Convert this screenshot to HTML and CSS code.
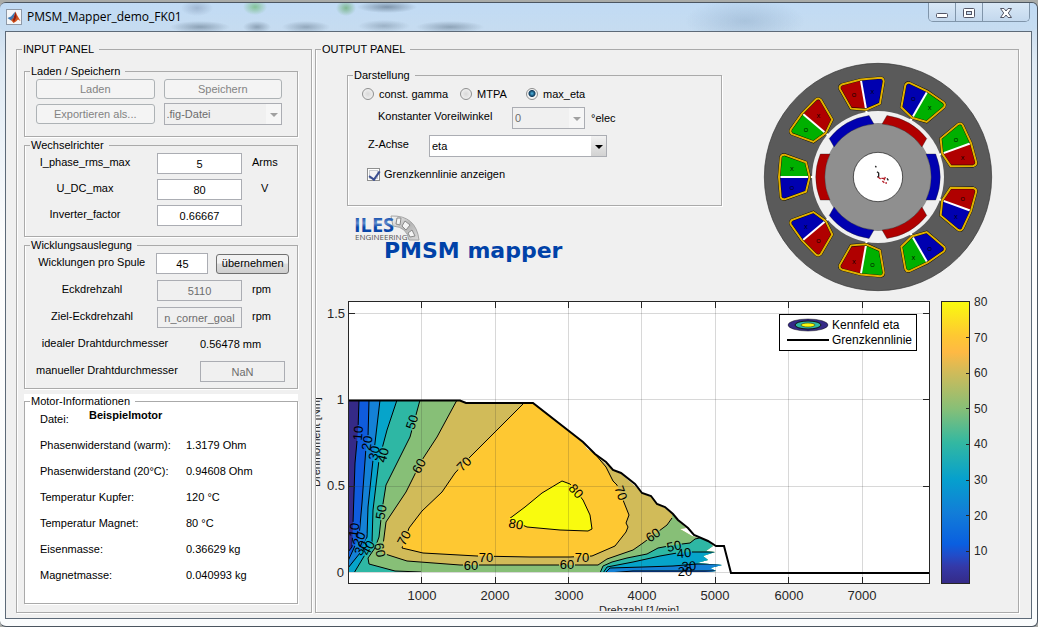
FILE: index.html
```html
<!DOCTYPE html>
<html lang="de">
<head>
<meta charset="UTF-8">
<meta name="viewport" content="width=device-width, initial-scale=1.0">
<title>PMSM_Mapper_demo_FK01</title>
<link rel="stylesheet" href="styles.css">
</head>
<body>
<div class="window">
    <header class="titlebar">
        <svg class="app-icon" width="16" height="16" viewBox="0 0 16 16">
            <rect x="0.5" y="0.5" width="15" height="15" fill="#f4f6f8" stroke="#8f9aa8"/>
            <path d="M1.5 9 L5 7.5 L8 4 L9.5 2.5 L7 11 L5 11.5 Z" fill="#3c78b4"/>
            <path d="M9.5 2.5 L11 6 L14.5 12 L12 10.5 L10 12.5 L7.5 14 L5 11 L7.5 9 Z" fill="#d4541c"/>
            <path d="M9.5 3 L10.5 8 L8 13 L7 11 Z" fill="#8e1f12"/>
        </svg>
        <h1 class="title">PMSM_Mapper_demo_FK01</h1>
        <div class="caption">
            <button type="button" aria-label="Minimieren">
                <svg width="14" height="12" viewBox="0 0 14 12"><rect x="1.5" y="6.5" width="11" height="4" rx="1" fill="#fff" stroke="#535666"/></svg>
            </button>
            <button type="button" aria-label="Maximieren">
                <svg width="14" height="12" viewBox="0 0 14 12"><rect x="1.5" y="1.5" width="11" height="9" rx="1" fill="#fff" stroke="#535666"/><rect x="4.5" y="4.5" width="5" height="3" fill="#c8dcf0" stroke="#535666"/></svg>
            </button>
            <button type="button" class="close" aria-label="Schließen">
                <svg width="14" height="12" viewBox="0 0 14 12"><path d="M1.5 1.5 H5 L7 4 L9 1.5 H12.5 L9.3 6 L12.5 10.5 H9 L7 8 L5 10.5 H1.5 L4.7 6 Z" fill="#fff" stroke="#535666"/></svg>
            </button>
        </div>
    </header>

    <main class="client">
        <fieldset class="panel input-panel">
            <legend>INPUT PANEL</legend>

            <fieldset class="group files">
                <legend>Laden / Speichern</legend>
                <button type="button" class="btn" disabled>Laden</button>
                <button type="button" class="btn" disabled>Speichern</button>
                <button type="button" class="btn" disabled>Exportieren als...</button>
                <span class="select disabled">
                    <select aria-label="Dateiformat" disabled><option>.fig-Datei</option></select>
                </span>
            </fieldset>

            <fieldset class="group inverter">
                <legend>Wechselrichter</legend>
                <div class="row">
                    <label for="iphase">I_phase_rms_max</label>
                    <input type="text" id="iphase" value="5">
                    <span>Arms</span>
                </div>
                <div class="row">
                    <label for="udc">U_DC_max</label>
                    <input type="text" id="udc" value="80">
                    <span class="unit-v">V</span>
                </div>
                <div class="row">
                    <label for="invfactor">Inverter_factor</label>
                    <input type="text" id="invfactor" value="0.66667">
                </div>
            </fieldset>

            <fieldset class="group winding">
                <legend>Wicklungsauslegung</legend>
                <div class="row">
                    <label for="turns">Wicklungen pro Spule</label>
                    <input type="text" id="turns" class="short" value="45">
                    <button type="button" class="btn apply">übernehmen</button>
                </div>
                <div class="row">
                    <label for="corner">Eckdrehzahl</label>
                    <input type="text" id="corner" value="5110" disabled>
                    <span>rpm</span>
                </div>
                <div class="row">
                    <label for="goal">Ziel-Eckdrehzahl</label>
                    <input type="text" id="goal" value="n_corner_goal" disabled>
                    <span>rpm</span>
                </div>
                <div class="row wire">
                    <label for="ideal">idealer Drahtdurchmesser</label>
                    <output id="ideal">0.56478 mm</output>
                </div>
                <div class="row wire">
                    <label for="manual">manueller Drahtdurchmesser</label>
                    <input type="text" id="manual" value="NaN" disabled>
                </div>
            </fieldset>

            <div class="motor-info">
                <fieldset class="group">
                    <legend>Motor-Informationen</legend>
                    <dl>
                        <div class="file"><dt>Datei:</dt><dd>Beispielmotor</dd></div>
                        <div><dt>Phasenwiderstand (warm):</dt><dd>1.3179 Ohm</dd></div>
                        <div><dt>Phasenwiderstand (20°C):</dt><dd>0.94608 Ohm</dd></div>
                        <div><dt>Temperatur Kupfer:</dt><dd>120 °C</dd></div>
                        <div><dt>Temperatur Magnet:</dt><dd>80 °C</dd></div>
                        <div><dt>Eisenmasse:</dt><dd>0.36629 kg</dd></div>
                        <div><dt>Magnetmasse:</dt><dd>0.040993 kg</dd></div>
                    </dl>
                </fieldset>
            </div>
        </fieldset>

        <fieldset class="panel output-panel">
            <legend>OUTPUT PANEL</legend>

            <div class="upper">
                <div class="settings">
                    <fieldset class="group view">
                        <legend>Darstellung</legend>
                        <div class="radios">
                            <label><input type="radio" name="mode"> const. gamma</label>
                            <label><input type="radio" name="mode"> MTPA</label>
                            <label><input type="radio" name="mode" checked> max_eta</label>
                        </div>
                        <div class="line angle">
                            <label for="gamma">Konstanter Voreilwinkel</label>
                            <span class="select disabled"><select id="gamma" disabled><option>0</option></select></span>
                            <span>°elec</span>
                        </div>
                        <div class="line zaxis">
                            <label for="zaxis">Z-Achse</label>
                            <span class="select"><select id="zaxis"><option>eta</option></select></span>
                        </div>
                        <div class="line">
                            <label class="check"><input type="checkbox" checked> Grenzkennlinie anzeigen</label>
                        </div>
                    </fieldset>

                    <svg class="logo" width="220" height="52" viewBox="352 215 220 52">
                        <defs>
                            <linearGradient id="steel" x1="0" y1="0" x2="1" y2="1">
                                <stop offset="0" stop-color="#fafafa"/><stop offset="0.5" stop-color="#b4b4b4"/><stop offset="1" stop-color="#dcdcdc"/>
                            </linearGradient>
                            <linearGradient id="ink" x1="0" y1="0" x2="0" y2="1">
                                <stop offset="0.2" stop-color="#0a46a8"/><stop offset="0.45" stop-color="#5f8ccc"/><stop offset="0.6" stop-color="#0a46a8"/>
                            </linearGradient>
                        </defs>
                        <path d="M391 218 Q416 217 419 242 L409 242 Q407 229 393 228 Z" fill="url(#steel)" stroke="#a4a4a4"/>
                        <path d="M397 220 l4 0 -1 7 -4 -1 Z M405 223 l5 4 -4 5 -4 -4 Z M412 232 l3 6 -5 1 -2 -4 Z" fill="#f4f4f4" stroke="#8a8a8a"/>
                        <text class="logo-iles" x="354" y="234" fill="url(#ink)">ILES</text>
                        <text class="logo-eng" x="355" y="242">ENGINEERING</text>
                        <text class="logo-name" x="384" y="260">PMSM mapper</text>
                    </svg>
                </div>

                <!-- stator, slots and rotor, origin in the shaft centre -->
                <svg class="motor" width="230" height="230" viewBox="-345 -345 690 690">
                    <defs>
                        <path id="sideA" d="M205 0 L216 -44 L280 -67 L291 -61 L296 0 Z"/>
                        <path id="sideB" d="M205 0 L216 44 L280 67 L291 61 L296 0 Z"/>
                        <g id="frame">
                            <path d="M194 0 H296" stroke="#fff" stroke-width="6"/>
                            <path d="M205 0 L216 -44 L280 -67 Q290 -68 292 -59 L297 0 L292 59 Q290 68 280 67 L216 44 Z" fill="none" stroke="#000" stroke-width="8"/>
                            <path d="M205 0 L216 -44 L280 -67 Q290 -68 292 -59 L297 0 L292 59 Q290 68 280 67 L216 44 Z" fill="none" stroke="#e0b000" stroke-width="6"/>
                        </g>
                        <path id="magnet" d="M144 -69 L173 -69 A186 186 0 0 1 173 69 L144 69 A160 160 0 0 0 144 -69 Z" stroke="#222" stroke-width="1"/>
                    </defs>
                    <circle r="341" fill="#5a5a5a" stroke="#333" stroke-width="2"/>
                    <circle r="198" fill="#f0f0f0"/>
                    <circle r="162" fill="#8f8f8f"/>
                    <circle r="74" fill="#fff" stroke="#111" stroke-width="2"/>

                    <g transform="rotate(180)"><use href="#sideA" class="blue"/><use href="#sideB" class="green"/><use href="#frame"/></g>
                    <g transform="rotate(-140)"><use href="#sideA" class="green"/><use href="#sideB" class="red"/><use href="#frame"/></g>
                    <g transform="rotate(-100)"><use href="#sideA" class="red"/><use href="#sideB" class="blue"/><use href="#frame"/></g>
                    <g transform="rotate(-60)"><use href="#sideA" class="blue"/><use href="#sideB" class="green"/><use href="#frame"/></g>
                    <g transform="rotate(-20)"><use href="#sideA" class="green"/><use href="#sideB" class="red"/><use href="#frame"/></g>
                    <g transform="rotate(20)"><use href="#sideA" class="red"/><use href="#sideB" class="blue"/><use href="#frame"/></g>
                    <g transform="rotate(60)"><use href="#sideA" class="blue"/><use href="#sideB" class="green"/><use href="#frame"/></g>
                    <g transform="rotate(100)"><use href="#sideA" class="green"/><use href="#sideB" class="red"/><use href="#frame"/></g>
                    <g transform="rotate(140)"><use href="#sideA" class="red"/><use href="#sideB" class="blue"/><use href="#frame"/></g>

                    <use href="#magnet" class="blue"/>
                    <use href="#magnet" class="red" transform="rotate(60)"/>
                    <use href="#magnet" class="blue" transform="rotate(120)"/>
                    <use href="#magnet" class="red" transform="rotate(180)"/>
                    <use href="#magnet" class="blue" transform="rotate(240)"/>
                    <use href="#magnet" class="red" transform="rotate(300)"/>

                    <g class="coil">
                        <text x="-258" y="-17">X</text><text x="-258" y="39">O</text>
                        <text x="-216" y="-134">O</text><text x="-179" y="-177">X</text>
                        <text x="-72" y="-239">O</text><text x="-17" y="-250">X</text>
                        <text x="106" y="-228">O</text><text x="155" y="-200">X</text>
                        <text x="234" y="-104">O</text><text x="254" y="-51">X</text>
                        <text x="254" y="73">O</text><text x="234" y="126">X</text>
                        <text x="155" y="221">O</text><text x="106" y="249">X</text>
                        <text x="-72" y="261">X</text><text x="-17" y="271">O</text>
                        <text x="-216" y="156">X</text><text x="-179" y="199">O</text>
                    </g>
                    <path d="M-8 -33 l3 4 M-3 -16 l5 4 v10 l-4 3 M27 4 l4 6" stroke="#222" stroke-width="4" fill="none"/>
                    <path d="M0 0 l8 6 M10 4 h8 M13 12 l6 5 M22 0 l-4 10 M22 18 h5" stroke="#b41e28" stroke-width="4" fill="none"/>
                </svg>
            </div>

            <svg class="chart" viewBox="316 295 702 316">
                <defs>
                    <linearGradient id="parula" x1="0" y1="1" x2="0" y2="0">
                        <stop offset="0" stop-color="#352a87"/>
                        <stop offset="0.06" stop-color="#3439a8"/>
                        <stop offset="0.1" stop-color="#214cc9"/>
                        <stop offset="0.14" stop-color="#0a5fe0"/>
                        <stop offset="0.25" stop-color="#127dd8"/>
                        <stop offset="0.37" stop-color="#06a0cd"/>
                        <stop offset="0.5" stop-color="#33b8a1"/>
                        <stop offset="0.62" stop-color="#87bf77"/>
                        <stop offset="0.75" stop-color="#d1bb59"/>
                        <stop offset="0.82" stop-color="#feb944"/>
                        <stop offset="0.88" stop-color="#fec832"/>
                        <stop offset="1" stop-color="#f9fb0e"/>
                    </linearGradient>
                    <clipPath id="field">
                        <path d="M348 400 H460 L466 403 H533 L583 443 L587 449 L595 454 L606 464 L613 470 L621 474 L635 486 L642 493 L651 497 L657 504 L665 508 L673 515 L678 521 L686 528 L680 529 L692 536 L708 541 L713 546 L706 551 L715 552 L703 556 L708 560 L697 563 L722 565 L710 568 L716 571 L705 572 H348 Z"/>
                    </clipPath>
                    <rect id="gap" x="-8" y="-5" width="16" height="10"/>
                    <mask id="gaps" maskUnits="userSpaceOnUse" x="340" y="390" width="400" height="190">
                        <rect x="340" y="390" width="400" height="190" fill="#fff"/>
                        <use href="#gap" transform="translate(358 433) rotate(-84)"/>
                        <use href="#gap" transform="translate(367 443) rotate(-80)"/>
                        <use href="#gap" transform="translate(374 453) rotate(-78)"/>
                        <use href="#gap" transform="translate(383 455) rotate(-75)"/>
                        <use href="#gap" transform="translate(412 422) rotate(-72)"/>
                        <use href="#gap" transform="translate(419 466) rotate(-62)"/>
                        <use href="#gap" transform="translate(464 464) rotate(-45)"/>
                        <use href="#gap" transform="translate(381 512) rotate(-80)"/>
                        <use href="#gap" transform="translate(404 538) rotate(-62)"/>
                        <use href="#gap" transform="translate(354 530) rotate(-82)"/>
                        <use href="#gap" transform="translate(359 539) rotate(-68)"/>
                        <use href="#gap" transform="translate(367 548) rotate(-62)"/>
                        <use href="#gap" transform="translate(381 550) rotate(80)"/>
                        <use href="#gap" transform="translate(486 557)"/>
                        <use href="#gap" transform="translate(471 565)"/>
                        <use href="#gap" transform="translate(582 557)"/>
                        <use href="#gap" transform="translate(567 564)"/>
                        <use href="#gap" transform="translate(576 491) rotate(48)"/>
                        <use href="#gap" transform="translate(516 524) rotate(10)"/>
                        <use href="#gap" transform="translate(621 493) rotate(70)"/>
                        <use href="#gap" transform="translate(653 535) rotate(-35)"/>
                        <use href="#gap" transform="translate(674 546) rotate(-12)"/>
                        <use href="#gap" transform="translate(684 553) rotate(-6)"/>
                    </mask>
                </defs>

                <rect x="348" y="301" width="582" height="283" fill="#fff"/>

                <!-- efficiency map -->
                <g clip-path="url(#field)">
                    <rect x="348" y="398" width="380" height="175" fill="#d1bb59"/>
                    <path class="f70" d="M524 403 L495 432 L470 457 L455 473 L442 492 L422 511 L409 528 L402 548 L423 553 L477 556 L530 557 H570 L592 556 L615 546 L626 532 L628 527 L626 523 L629 515 L625 505 L617 485 L613 481 L606 467 L595 454 L595 398 H524 Z"/>
                    <path class="f80" d="M509 519 L525 507 L542 493 L562 481 L570 484 L583 500 L590 515 L592 529 L588 531 L560 530 L527 527 Z"/>
                    <path class="f50" d="M457 400 L437 437 L422 460 L406 492 L386 522 L382 553 L407 561 L460 565 H598 L607 559 L633 550 L643 543 L667 525 L672 518 L672 510 H740 V574 H346 V398 Z"/>
                    <path class="f40" d="M420 400 L410 437 L397 463 L386 485 L382 510 L379 537 L375 548 L368 558 L369 564 L395 571 L421 572 V575 H346 V398 Z"/>
                    <path class="f30" d="M397 400 L387 430 L379 460 L373 510 L372 543 L354 573 H346 V398 Z"/>
                    <path class="f20" d="M380 400 L375 443 L373 460 L368 507 L367 537 L360 553 L348 568 H346 V398 Z"/>
                    <path class="f10" d="M369 400 L368 437 L366 447 L362 503 L359 537 L348 561 H346 V398 Z"/>
                    <path class="f0" d="M359 400 L358 430 L355 463 L353 523 L352 547 L348 552 H346 V398 Z"/>
                    <path class="f40" d="M600 573 L603 566 L612 562 L627 558 L647 554 L658 548 L674 545 L690 543 L695 539 L704 537 H740 V574 Z"/>
                    <path class="f30" d="M603 573 L607 567 L633 562 L660 556 L677 553 L690 552 H740 V574 Z"/>
                    <path class="f20" d="M605 573 L610 568 L643 567 L673 566 L697 564 H740 V574 Z"/>
                    <path class="f10" d="M608 573 L633 571 H740 V574 Z"/>
                </g>
                <g class="contours" clip-path="url(#field)">
                    <g mask="url(#gaps)">
                        <path d="M359 400 L358 430 L355 463 L353 523 L352 547 L348 552"/>
                        <path d="M369 400 L368 437 L366 447 L362 503 L359 537 L348 561"/>
                        <path d="M380 400 L375 443 L373 460 L368 507 L367 537 L360 553 L348 568"/>
                        <path d="M397 400 L387 430 L379 460 L373 510 L372 543 L354 573"/>
                        <path d="M420 400 L410 437 L397 463 L386 485 L382 510 L379 537 L375 548 L368 558 L369 564 L395 571 L421 572"/>
                        <path d="M457 400 L437 437 L422 460 L406 492 L386 522 L382 553 L407 561 L460 565 H598 L607 559 L633 550 L643 543 L667 525 L672 518"/>
                        <path d="M524 403 L495 432 L470 457 L455 473 L442 492 L422 511 L409 528 L402 548 L423 553 L477 556 L530 557 H570 L592 556 L615 546 L626 532 L628 527 L626 523 L629 515 L625 505 L617 485 L613 481 L606 467 L595 454"/>
                        <path d="M509 519 L525 507 L542 493 L562 481 L570 484 L583 500 L590 515 L592 529 L588 531 L560 530 L527 527 Z"/>
                        <path d="M600 573 L603 566 L612 562 L627 558 L647 554 L658 548 L674 545 L690 543 L695 539 L704 537"/>
                        <path d="M603 573 L607 567 L633 562 L660 556 L677 553 L690 552 H715"/>
                        <path d="M605 573 L610 568 L643 567 L673 566 L697 564 H722"/>
                        <path d="M608 573 L633 571 H716"/>
                    </g>
                </g>

                <path class="gridlines" d="M421.5 302 V583 M495.5 302 V583 M568.5 302 V583 M641.5 302 V583 M715.5 302 V583 M788.5 302 V583 M862.5 302 V583 M349 313.5 h580 M349 399.5 h580 M349 486.5 h580 M349 572.5 h580"/>
                <path class="limit" d="M348 400.5 H460 L466 403 H533 L583 442 L595 454 L606 462 L613 470 L621 473 L635 484 L642 493 L651 496 L657 504 L665 507 L673 514 L678 520 L688 528 L694 535 L708 541 L716 546 H724 L731 573 H930"/>

                <g class="clabels">
                    <text transform="translate(358 433) rotate(-84)">10</text>
                    <text transform="translate(367 443) rotate(-80)">20</text>
                    <text transform="translate(374 453) rotate(-78)">30</text>
                    <text transform="translate(383 455) rotate(-75)">40</text>
                    <text transform="translate(412 422) rotate(-72)">50</text>
                    <text transform="translate(419 466) rotate(-62)">60</text>
                    <text transform="translate(464 464) rotate(-45)">70</text>
                    <text transform="translate(381 512) rotate(-80)">50</text>
                    <text transform="translate(404 538) rotate(-62)">70</text>
                    <text transform="translate(354 530) rotate(-82)">10</text>
                    <text transform="translate(359 539) rotate(-68)">20</text>
                    <text transform="translate(361 548) rotate(-62)">30</text>
                    <text transform="translate(368 548) rotate(-62)">40</text>
                    <text transform="translate(380 550) rotate(80)">60</text>
                    <text transform="translate(486 557)">70</text>
                    <text transform="translate(471 565)">60</text>
                    <text transform="translate(582 557)">70</text>
                    <text transform="translate(567 564)">60</text>
                    <text transform="translate(576 491) rotate(48)">80</text>
                    <text transform="translate(516 524) rotate(10)">80</text>
                    <text transform="translate(621 493) rotate(70)">70</text>
                    <text transform="translate(653 535) rotate(-35)">60</text>
                    <text transform="translate(674 546) rotate(-12)">50</text>
                    <text transform="translate(684 553) rotate(-6)">40</text>
                    <text transform="translate(689 566) rotate(-4)">30</text>
                    <text transform="translate(685 571)">20</text>
                </g>

                <!-- axes -->
                <rect class="axis" x="348.5" y="301.5" width="581" height="282"/>
                <path class="axis" d="M421.5 302 v6 M495.5 302 v6 M568.5 302 v6 M641.5 302 v6 M715.5 302 v6 M788.5 302 v6 M862.5 302 v6 M421.5 583 v-6 M495.5 583 v-6 M568.5 583 v-6 M641.5 583 v-6 M715.5 583 v-6 M788.5 583 v-6 M862.5 583 v-6 M349 313.5 h6 M349 486.5 h6 M929 313.5 h-6 M929 399.5 h-6 M929 486.5 h-6"/>
                <g class="ticks xticks">
                    <text x="422" y="600">1000</text><text x="495" y="600">2000</text><text x="569" y="600">3000</text><text x="642" y="600">4000</text><text x="715" y="600">5000</text><text x="789" y="600">6000</text><text x="862" y="600">7000</text>
                    <text class="xlabel" x="639" y="614">Drehzahl [1/min]</text>
                </g>
                <g class="ticks yticks">
                    <text x="345" y="318">1.5</text><text x="344" y="404">1</text><text x="345" y="490">0.5</text><text x="344" y="577">0</text>
                </g>
                <text class="ylabel" transform="translate(320 442) rotate(-90)">Drehmoment [Nm]</text>

                <!-- legend -->
                <rect x="779.5" y="314.5" width="137" height="36" fill="#fff" stroke="#000"/>
                <ellipse cx="808" cy="325" rx="20" ry="6" fill="#352a87" stroke="#111" stroke-width="0.5"/>
                <ellipse cx="808" cy="325" rx="13" ry="4" fill="#2eb7a4" stroke="#111"/>
                <ellipse cx="808" cy="325" rx="7" ry="2" fill="#f9fb0e" stroke="#111" stroke-width="0.5"/>
                <path d="M787 340 H829" stroke="#000" stroke-width="2"/>
                <g class="key"><text x="832" y="329">Kennfeld eta</text><text x="832" y="344">Grenzkennlinie</text></g>

                <!-- colour bar -->
                <rect x="941.5" y="301.5" width="28" height="282" fill="url(#parula)" stroke="#262626"/>
                <path class="axis" d="M969 337.5 h-3 M969 373.5 h-3 M969 408.5 h-3 M969 444.5 h-3 M969 480.5 h-3 M969 515.5 h-3 M969 551.5 h-3"/>
                <g class="cticks">
                    <text x="974" y="306">80</text><text x="974" y="342">70</text><text x="974" y="377">60</text><text x="974" y="413">50</text><text x="974" y="448">40</text><text x="974" y="484">30</text><text x="974" y="520">20</text><text x="974" y="555">10</text>
                </g>
            </svg>
        </fieldset>
    </main>
</div>
</body>
</html>
```
FILE: styles.css
```css
* {
    box-sizing: border-box;
}

body {
    margin: 0;
    padding-top: 2px;
    min-height: 100vh;
    display: flex;
    background: #a9aba8;
    font: 11px/13px "Liberation Sans", Arial, sans-serif;
    color: #000;
}

button, input, select {
    font: inherit;
    color: inherit;
    margin: 0;
}

fieldset {
    margin: 0;
    min-width: 0;
}

/* window frame */
.window {
    flex: 1;
    display: flex;
    flex-direction: column;
    padding: 0 5px 7px;
    border: 1px solid #4b5560;
    border-width: 1px 1px 1px 0;
    border-radius: 6px;
    background: linear-gradient(#c3d9ee 0, #cfe0f0 30px, #dfeaf4 60px, #fdfdfd 240px, #fafcfd 100%);
}

.titlebar {
    display: flex;
    align-items: flex-start;
    height: 28px;
    margin: 0 -5px;
    padding: 0 7px 0 6px;
    border-radius: 5px;
    background:
        radial-gradient(ellipse 30px 6px at 200px 24px, rgba(70, 90, 110, 0.45), transparent),
        radial-gradient(ellipse 14px 6px at 257px 24px, rgba(70, 90, 110, 0.45), transparent),
        radial-gradient(ellipse 24px 6px at 306px 24px, rgba(70, 90, 110, 0.4), transparent),
        radial-gradient(ellipse 16px 8px at 197px 5px, rgba(110, 130, 160, 0.4), transparent),
        radial-gradient(ellipse 12px 8px at 255px 4px, rgba(70, 170, 60, 0.5), transparent),
        radial-gradient(ellipse 10px 8px at 346px 5px, rgba(60, 150, 50, 0.5), transparent),
        radial-gradient(ellipse 30px 6px at 387px 4px, rgba(60, 80, 100, 0.5), transparent),
        radial-gradient(ellipse 26px 6px at 384px 23px, rgba(60, 80, 100, 0.3), transparent),
        radial-gradient(ellipse 34px 6px at 450px 24px, rgba(60, 80, 100, 0.4), transparent),
        radial-gradient(ellipse 60px 22px at 745px 18px, rgba(130, 160, 190, 0.4), transparent),
        linear-gradient(rgba(190, 220, 250, 0.5), rgba(190, 216, 240, 0.5));
}

.app-icon {
    margin-top: 6px;
}

.title {
    flex: 1;
    margin: 5px 0 0 5px;
    font: 12px/17px "Open Sans", "Noto Sans", sans-serif;
}

.caption {
    display: flex;
    height: 19px;
    border: 1px solid #8095aa;
    border-top: 0;
    border-radius: 0 0 5px 5px;
}

.caption button {
    width: 27px;
    padding: 2px 0 0;
    border: 0;
    border-right: 1px solid #8095aa;
    background: linear-gradient(#d9e8f6, #c3d8ed);
}

.caption svg {
    display: block;
    margin: 0 auto;
}

.caption .close {
    width: 46px;
    border-right: 0;
    border-radius: 0 0 4px 0;
}

.caption button:first-child {
    border-radius: 0 0 0 4px;
}

.client {
    flex: 1;
    display: grid;
    grid-template-columns: 296fr 704fr;
    gap: 3px;
    padding: 11px 12px 5px 10px;
    border: 1px solid #5d6a78;
    background: #f0f0f0;
}

/* etched panels */
.panel, .group {
    border: 1px solid #aaa;
    box-shadow: 1px 1px 0 #fff, inset 1px 0 0 #fff;
}

.panel {
    padding: 9px 13px 0 7px;
}

.panel > legend, .group > legend {
    margin-left: -2px;
    padding: 0 5px 0 1px;
}

.group > legend {
    margin-left: -6px;
}

.group {
    padding: 1px 8px 10px 11px;
    margin-bottom: 2px;
}

.output-panel {
    padding: 9px 0 0;
}

.output-panel > legend {
    margin-left: 5px;
}

/* buttons and boxes */
.btn {
    height: 20px;
    padding: 0;
    border: 1px solid #707070;
    border-radius: 3px;
    background: linear-gradient(#f2f2f2 45%, #dcdcdc 50%, #cfcfcf);
}

.btn:disabled {
    border-color: #adb2b5;
    background: #f4f4f4;
    color: #838383;
}

input[type="text"] {
    width: 85px;
    height: 21px;
    padding: 0;
    border: 1px solid #abadb3;
    background: #fff;
    text-align: center;
}

input[type="text"]:disabled {
    background: #f0f0f0;
    color: #6d6d6d;
}

.select {
    position: relative;
    display: block;
}

.select select {
    display: block;
    width: 100%;
    height: 22px;
    padding: 0 2px;
    appearance: none;
    border: 1px solid #abadb3;
    border-radius: 0;
    background: linear-gradient(#f2f2f2, #d2d2d2) no-repeat right / 15px 100% #fff;
}

.select::after {
    content: "";
    position: absolute;
    right: 4px;
    top: 10px;
    border: 4px solid transparent;
    border-top-color: #000;
    border-bottom: 0;
}

.select.disabled select {
    background: linear-gradient(#f6f6f6, #f6f6f6) no-repeat right / 15px 100% #f0f0f0;
    color: #6d6d6d;
    opacity: 1;
}

.select.disabled::after {
    border-top-color: #a0a0a0;
}

/* input panel */
.files {
    display: grid;
    grid-template-columns: 1fr 1fr;
    gap: 4px 9px;
    align-items: center;
    padding-right: 15px;
    padding-bottom: 11px;
}

.inverter, .winding {
    display: flex;
    flex-direction: column;
    gap: 5px;
}

.winding {
    gap: 6px;
    padding-bottom: 6px;
}

.row {
    display: flex;
    align-items: center;
}

.row label {
    width: 110px;
    margin: 0 11px 0 0;
    padding-bottom: 3px;
    text-align: center;
    white-space: nowrap;
}

.inverter .row label {
    width: 98px;
    margin-right: 23px;
}

.row span {
    margin-left: 10px;
    padding-bottom: 2px;
}

.row .unit-v {
    margin-left: 19px;
}

.winding .row label {
    padding-left: 2px;
}

.row .short {
    width: 52px;
}

.row .apply {
    width: 73px;
    margin-left: 8px;
}

.winding .wire label {
    width: 138px;
    margin-right: 26px;
    padding-left: 0;
}

.wire {
    min-height: 21px;
}

.motor-info {
    margin-top: 5px;
    padding-top: 1px;
    background: #fff;
}

.motor-info .group {
    margin: 0;
    padding: 0 8px 17px 15px;
}

.motor-info .group > legend {
    margin-left: -10px;
}

dl {
    display: grid;
    gap: 4px;
    margin: 0;
}

dl div {
    display: grid;
    grid-template-columns: 146px 1fr;
    line-height: 22px;
}

dl .file {
    grid-template-columns: 49px 1fr;
}

.file dd {
    font-weight: bold;
    line-height: 14px;
}

dd {
    margin: 0;
}

/* output panel */
.upper {
    display: flex;
    justify-content: space-between;
    padding: 0 25px 3px 31px;
}

.settings {
    flex: 0 1 375px;
    padding-top: 4px;
}

.view {
    padding: 2px 8px 14px 14px;
}

.view > legend {
    margin-left: -9px;
}

.radios {
    display: flex;
    height: 20px;
    margin-bottom: 3px;
}

.radios label, .check, .line {
    display: flex;
    align-items: center;
}

.radios label {
    width: 98px;
    gap: 5px;
}

.radios label:nth-child(2) {
    width: 66px;
}

input[type="radio"] {
    width: 12px;
    height: 12px;
    appearance: none;
    border: 1px solid #8e8f8f;
    border-radius: 50%;
    background: radial-gradient(#d8d8d8, #f8f8f8);
}

input[type="radio"]:checked {
    background: radial-gradient(circle at 50% 45%, #4fb8e6 0, #0d3a5c 3px, #f4f4f4 4px);
}

.line {
    height: 22px;
    margin-bottom: 6px;
}

.line > label {
    padding-bottom: 3px;
}

.angle {
    padding-left: 16px;
    gap: 6px;
}

.angle label {
    width: 128px;
}

.angle .select {
    width: 73px;
}

.zaxis {
    padding-left: 6px;
}

.zaxis label {
    width: 61px;
}

.zaxis .select {
    width: 178px;
}

.line .check {
    padding: 0 0 0 5px;
    gap: 4px;
}

input[type="checkbox"] {
    width: 13px;
    height: 13px;
    appearance: none;
    border: 1px solid #8e8f8f;
    background: #f4f4f4;
    box-shadow: inset 0 0 0 1px #fff, inset 0 0 0 2px #c8ccd0;
}

input[type="checkbox"]:checked::before {
    content: "";
    display: block;
    width: 5px;
    height: 9px;
    margin: 0 0 0 3px;
    border: solid #3b4f91;
    border-width: 0 2px 2px 0;
    transform: rotate(35deg);
}

.logo {
    display: block;
    margin: 7px 0 0 5px;
}

.logo-iles {
    font: bold 20px "Open Sans", sans-serif;
}

.logo-eng {
    font: 8px "Open Sans", sans-serif;
    fill: #555;
}

.logo-name {
    font: bold 22px "DejaVu Sans", sans-serif;
    fill: #0042a8;
}

.motor {
    display: block;
    flex: none;
    margin-top: -3px;
}

.coil {
    font: 17px "Liberation Sans", sans-serif;
    text-anchor: middle;
}

.red { fill: #b00000; }
.green { fill: #00b000; }
.blue { fill: #0000b0; }

/* efficiency chart */
.chart {
    display: block;
    width: 100%;
}

.f0 { fill: #352a87; }
.f10 { fill: #0f5cdd; }
.f20 { fill: #1481d6; }
.f30 { fill: #06a4ca; }
.f40 { fill: #2eb7a4; }
.f50 { fill: #87bf77; }
.f70 { fill: #fec832; }
.f80 { fill: #f9fb0e; }

.contours {
    fill: none;
    stroke: #000;
}

.gridlines {
    stroke: #262626;
    stroke-opacity: 0.18;
}

.limit {
    fill: none;
    stroke: #000;
    stroke-width: 2;
}

.axis {
    fill: none;
    stroke: #262626;
}

.clabels {
    font-size: 13px;
    text-anchor: middle;
    dominant-baseline: central;
}

.ticks {
    font-size: 13px;
    fill: #262626;
}

.xticks, .ylabel {
    text-anchor: middle;
}

.yticks {
    text-anchor: end;
}

.key, .cticks {
    font-size: 12px;
}

.xlabel, .ylabel {
    font-size: 11px;
}

.ylabel, .cticks {
    fill: #262626;
}
```
